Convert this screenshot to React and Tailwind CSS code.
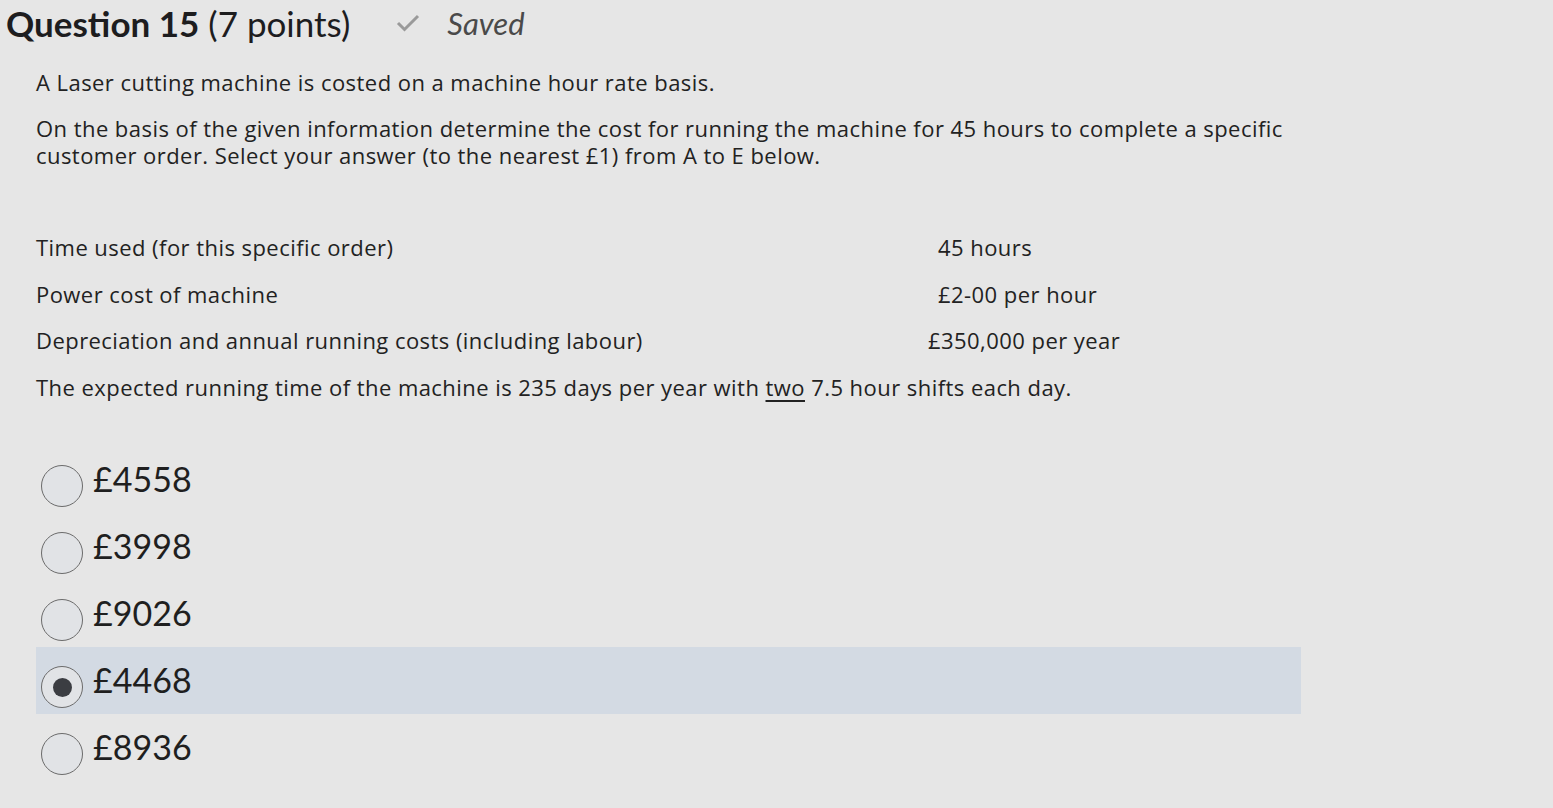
const rows = [
  { label: 'Time used (for this specific order)', value: '45 hours', pad: 'pl-[10px]' },
  { label: 'Power cost of machine', value: '£2-00 per hour', pad: 'pl-[10px]' },
  { label: 'Depreciation and annual running costs (including labour)', value: '£350,000 per year', pad: 'pl-0' },
];

const answers = ['£4558', '£3998', '£9026', '£4468', '£8936'];

function Radio({ checked }) {
  return (
    <span className="mt-[14px] w-[42px] h-[42px] rounded-full border border-[#6b6b6b] bg-[#e1e3e6] flex items-center justify-center shrink-0">
      {checked && <span className="w-[19px] h-[19px] rounded-full bg-[#3b3d42]" />}
    </span>
  );
}

export default function App() {
  const selected = 3;
  return (
    <div className="min-h-[808px] w-[1553px] bg-[#e6e6e6] text-[#202122] font-['Lato',sans-serif]">
      <div className="flex items-center h-[46px] pl-[6px]">
        <h2 className="text-[35px] leading-none text-[#1d1d1f]">
          <span className="font-bold">Question 15</span> (7 points)
        </h2>
        <svg className="ml-[46px] w-[24px] h-[20px]" viewBox="0 0 24 20">
          <path d="M2 10 L8.5 16.5 L22 3" fill="none" stroke="#9a9a9a" strokeWidth="3" />
        </svg>
        <span className="ml-[27px] text-[31px] italic text-[#4a4a4a] leading-none">Saved</span>
      </div>

      <div className="pl-[36px] pr-[252px] font-['Open_Sans',sans-serif] text-[22px] tracking-[0.45px] text-[#222]">
        <p className="mt-[23px] leading-[27px]">A Laser cutting machine is costed on a machine hour rate basis.</p>
        <p className="mt-[19px] leading-[27px]">
          On the basis of the given information determine the cost for running the machine for 45 hours to complete a specific customer order. Select your answer (to the nearest £1) from A to E below.
        </p>

        <div className="mt-[65px] flex flex-col gap-[19.5px]">
          {rows.map((r) => (
            <div key={r.label} className="flex leading-[27px]">
              <span className="w-[892px]">{r.label}</span>
              <span className={r.pad}>{r.value}</span>
            </div>
          ))}
          <p className="leading-[27px]">
            The expected running time of the machine is 235 days per year with <span className="underline underline-offset-4">two</span> 7.5 hour shifts each day.
          </p>
        </div>
      </div>

      <div className="mt-[45px] ml-[36px] w-[1265px] flex flex-col">
        {answers.map((a, i) => (
          <div
            key={a}
            className={`h-[67px] flex items-center pl-[5px] ${i === selected ? 'bg-[#d3dae3]' : ''}`}
          >
            <Radio checked={i === selected} />
            <span className="ml-[10px] text-[34px] leading-none text-[#1f1f1f]">{a}</span>
          </div>
        ))}
      </div>
    </div>
  );
}
